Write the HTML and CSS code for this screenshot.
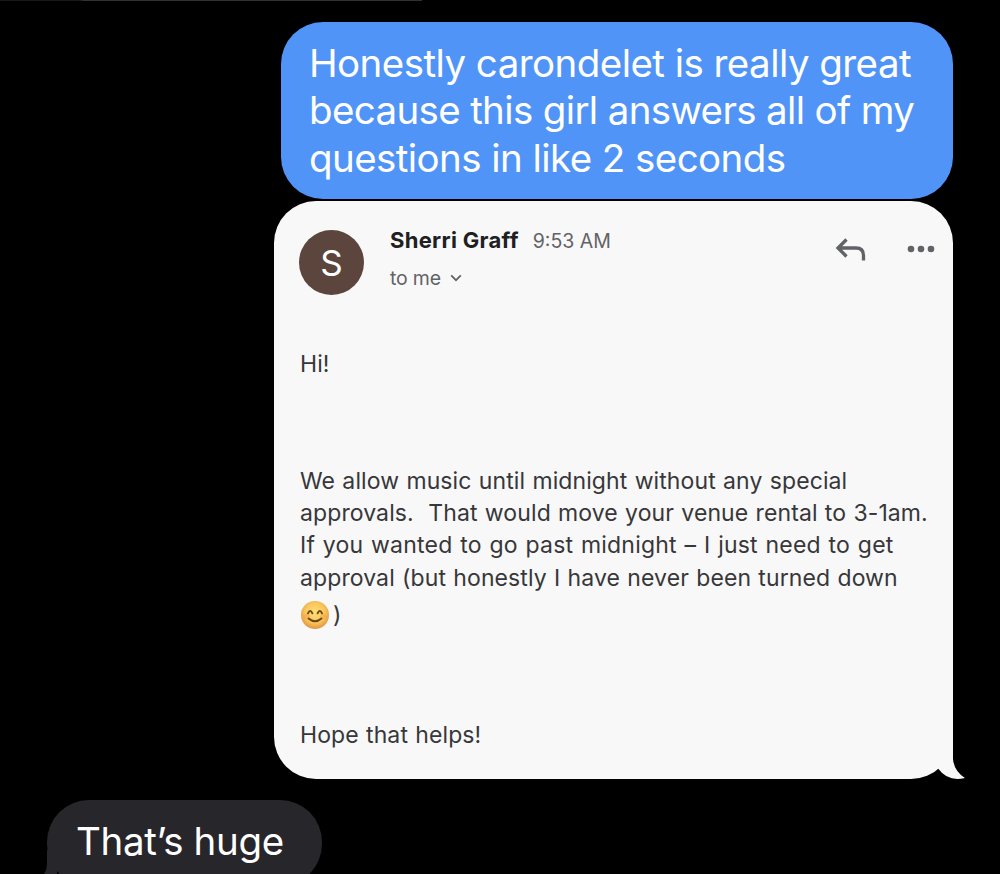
FILE: index.html
```
<!DOCTYPE html>
<html lang="en">
<head>
    <meta charset="UTF-8">
    <meta name="viewport" content="width=device-width, initial-scale=1.0">
    <title>Messages</title>
    <link rel="stylesheet" href="styles.css">
</head>
<body>
    <div class="top-line"></div>
    <main class="chat">
        <div class="bubble sent">
            <span class="sent-a">Honestly carondelet is really great</span><br>
            <span class="sent-b">because this girl answers all of my</span><br>
            <span class="sent-c">questions in like 2 seconds</span>
        </div>

        <article class="email">
            <header class="email-header">
                <div class="avatar">S</div>
                <div class="sender">
                    <div class="sender-row">
                        <span class="name">Sherri Graff</span>
                        <span class="time">9:53 AM</span>
                    </div>
                    <div class="to-row">
                        <span class="to">to me</span>
                        <svg class="chevron" width="12" height="8" viewBox="0 0 12 8"><path d="M1.2 1.4 6 6.2l4.8-4.8" fill="none" stroke="#626366" stroke-width="1.7"/></svg>
                    </div>
                </div>
                <svg class="reply" width="32" height="26" viewBox="0 0 32 26"><path d="M11.500 2.500 3 11l8.500 8.500M3.500 11H21q7.500 0 7.500 7.500v5" fill="none" stroke="#626367" stroke-width="3.300"/></svg>
                <svg class="more" width="28" height="8" viewBox="0 0 28 8"><g fill="#626367"><circle cx="4" cy="4" r="3.300"/><circle cx="14" cy="4" r="3.300"/><circle cx="24" cy="4" r="3.300"/></g></svg>
            </header>
            <p class="text hi">Hi!</p>
            <p class="text body-text">
                <span class="line-a">We allow music until midnight without any special</span><br>
                <span class="line-b">approvals.&nbsp; That would move your venue rental to 3-1am.</span><br>
                <span class="line-c">If you wanted to go past midnight – I just need to get</span><br>
                <span class="line-d">approval (but honestly I have never been turned down</span>
            </p>
            <p class="text emoji-row">
                <svg class="emoji" width="30" height="30" viewBox="0 0 30 30">
                    <defs>
                        <radialGradient id="face" cx="50%" cy="42%" r="55%">
                            <stop offset="0" stop-color="#ffdf78"/>
                            <stop offset="0.65" stop-color="#f8c65c"/>
                            <stop offset="1" stop-color="#e59b42"/>
                        </radialGradient>
                    </defs>
                    <circle cx="15" cy="15" r="14" fill="url(#face)"/>
                    <ellipse cx="6.500" cy="16.500" rx="3.500" ry="2.500" fill="#f3a04c" opacity="0.5"/>
                    <ellipse cx="23.500" cy="16.500" rx="3.500" ry="2.500" fill="#f3a04c" opacity="0.5"/>
                    <path d="M8 13.300q2.200-4.800 4.400 0M17.600 13.300q2.200-4.800 4.400 0M8.500 18.500q6.500 5.500 13 0" fill="none" stroke="#6b4418" stroke-width="1.900" stroke-linecap="round"/>
                </svg>
                <span>)</span>
            </p>
            <p class="text hope">Hope that helps!</p>
            <svg class="tail" width="30" height="46" viewBox="0 0 30 46"><path d="M0 0H17V26Q18 38 29 45Q12 49 2.500 36L0 34Z" fill="#f8f8f8"/></svg>
        </article>

        <div class="bubble received">
            That’s huge
            <svg class="received-tail" width="14" height="26" viewBox="0 0 14 26"><path d="M4 0V14Q4 20 0 26H14V0Z" fill="#27262b"/></svg>
        </div>
    </main>
</body>
</html>
```
FILE: styles.css
```
body {
    margin: 0;
    height: 874px;
    overflow: hidden;
    background: #000;
    font-family: Inter, "Liberation Sans", sans-serif;
}
svg {
    display: block;
    flex: none;
}
.top-line {
    width: 422px;
    height: 1px;
    background: linear-gradient(to right, #161717 80px, #303231 84px);
}
.chat {
    display: flex;
    flex-direction: column;
    padding: 21px 47px 0;
}
.bubble {
    box-sizing: border-box;
    color: #fff;
    font-size: 38.5px;
    line-height: 47.4px;
    white-space: nowrap;
}
.sent {
    align-self: flex-end;
    width: 672px;
    height: 177px;
    padding: 18px 28px;
    border-radius: 42px;
    background: #5194f8;
}
.sent-a {
    letter-spacing: -0.55px;
}
.sent-b {
    letter-spacing: -0.65px;
}
.sent-c {
    letter-spacing: -0.57px;
}
.email {
    position: relative;
    align-self: flex-end;
    box-sizing: border-box;
    width: 679px;
    height: 578px;
    margin-top: 2px;
    padding: 28px 18px 0 26px;
    border-radius: 42px;
    background: #f8f8f8;
    color: #37373a;
}
.email-header {
    display: flex;
    align-items: flex-start;
    height: 66px;
    margin-left: -1px;
}
.avatar {
    width: 65px;
    height: 65px;
    margin-top: 0.5px;
    border-radius: 50%;
    background: #5c453c;
    color: #fff;
    font-size: 35px;
    line-height: 66px;
    text-align: center;
}
.sender {
    flex: 1;
    padding-left: 26px;
    color: #626367;
    font-size: 19.5px;
    white-space: nowrap;
}
.sender-row {
    display: flex;
    gap: 14px;
    align-items: baseline;
    height: 26px;
    margin-top: -2px;
    line-height: 26px;
}
.name {
    color: #202023;
    font-size: 22px;
    font-weight: 700;
    letter-spacing: 0.3px;
}
.to-row {
    display: flex;
    gap: 9px;
    align-items: center;
    height: 24px;
    margin-top: 13px;
    line-height: 24px;
}
.to {
    letter-spacing: -0.2px;
}
.reply {
    margin: 8px 40px 0 0;
}
.more {
    margin-top: 16px;
}
.text {
    margin: 0;
    font-size: 23px;
    line-height: 32.3px;
    letter-spacing: 0.1px;
    word-spacing: 0.7px;
    white-space: nowrap;
}
.line-c {
    letter-spacing: 0.2px;
    word-spacing: 1.1px;
}
.hi {
    margin-top: 53px;
}
.body-text {
    margin-top: 84.6px;
}
.emoji-row {
    display: flex;
    gap: 3px;
    align-items: center;
    height: 34px;
    margin-top: 4px;
}
.hope {
    margin-top: 86.5px;
}
.tail {
    position: absolute;
    right: -13px;
    bottom: 0;
}
.received {
    position: relative;
    width: 275px;
    height: 86px;
    margin-top: 21px;
    padding: 18px 29px;
    border-radius: 42px;
    background: #27262b;
    letter-spacing: -0.35px;
}
.received-tail {
    position: absolute;
    left: -4px;
    top: 50px;
}
```
